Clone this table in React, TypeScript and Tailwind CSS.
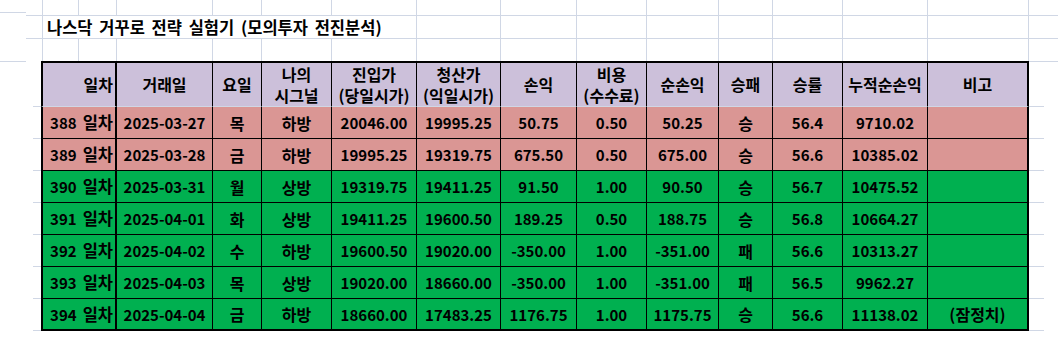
const grid = 'border-[#d0d7e5]'

// 표 열 너비 (테두리 포함)
const colCls = [
  'w-[76px] border-l-2 border-r-2 justify-end pr-[2px]',
  'w-[96px] border-r justify-center',
  'w-[49px] border-r justify-center',
  'w-[70px] border-r justify-center',
  'w-[85px] border-r justify-center',
  'w-[84px] border-r justify-center',
  'w-[76px] border-r justify-center',
  'w-[70px] border-r justify-center',
  'w-[72px] border-r justify-center',
  'w-[54px] border-r justify-center',
  'w-[70px] border-r justify-center',
  'w-[85px] border-r justify-center',
  'w-[101px] border-r-2 justify-center',
]

// 위쪽 빈 셀 너비
const topCols = ['w-[36px]', 'w-[38px]', 'w-[96px]', 'w-[49px]', 'w-[70px]', 'w-[85px]', 'w-[84px]', 'w-[76px]', 'w-[70px]', 'w-[72px]', 'w-[54px]', 'w-[70px]', 'w-[85px]', 'w-[101px]']

const headers: React.ReactNode[] = [
  '일차',
  '거래일',
  '요일',
  <>나의<br />시그널</>,
  <>진입가<br />(당일시가)</>,
  <>청산가<br />(익일시가)</>,
  '손익',
  <>비용<br />(수수료)</>,
  '순손익',
  '승패',
  '승률',
  '누적순손익',
  '비고',
]

type Row = {
  day: number
  date: string
  wd: string
  sig: string
  entry: string
  exit: string
  pnl: string
  fee: string
  net: string
  wl: string
  rate: string
  cum: string
  note: string
  pink?: boolean
}

const rows: Row[] = [
  { day: 388, date: '2025-03-27', wd: '목', sig: '하방', entry: '20046.00', exit: '19995.25', pnl: '50.75', fee: '0.50', net: '50.25', wl: '승', rate: '56.4', cum: '9710.02', note: '', pink: true },
  { day: 389, date: '2025-03-28', wd: '금', sig: '하방', entry: '19995.25', exit: '19319.75', pnl: '675.50', fee: '0.50', net: '675.00', wl: '승', rate: '56.6', cum: '10385.02', note: '', pink: true },
  { day: 390, date: '2025-03-31', wd: '월', sig: '상방', entry: '19319.75', exit: '19411.25', pnl: '91.50', fee: '1.00', net: '90.50', wl: '승', rate: '56.7', cum: '10475.52', note: '' },
  { day: 391, date: '2025-04-01', wd: '화', sig: '상방', entry: '19411.25', exit: '19600.50', pnl: '189.25', fee: '0.50', net: '188.75', wl: '승', rate: '56.8', cum: '10664.27', note: '' },
  { day: 392, date: '2025-04-02', wd: '수', sig: '하방', entry: '19600.50', exit: '19020.00', pnl: '-350.00', fee: '1.00', net: '-351.00', wl: '패', rate: '56.6', cum: '10313.27', note: '' },
  { day: 393, date: '2025-04-03', wd: '목', sig: '상방', entry: '19020.00', exit: '18660.00', pnl: '-350.00', fee: '1.00', net: '-351.00', wl: '패', rate: '56.5', cum: '9962.27', note: '' },
  { day: 394, date: '2025-04-04', wd: '금', sig: '하방', entry: '18660.00', exit: '17483.25', pnl: '1176.75', fee: '1.00', net: '1175.75', wl: '승', rate: '56.6', cum: '11138.02', note: '(잠정치)' },
]

export default function App() {
  return (
    <div className="w-[1058px] h-[347px] bg-white text-black overflow-hidden font-['Noto_Sans_CJK_KR',sans-serif]">

      {/* 시트 윗부분 */}
      <div className="flex h-[16px]">
        <div className={`w-[43px] flex border-r ${grid}`}>
          <div className={`w-[26px] h-[13px] border-b ${grid}`} />
          <div className={`flex-1 border-b ${grid}`} />
        </div>
        {topCols.map((w, i) => (
          <div key={i} className={`${w} border-r border-b ${grid}`} />
        ))}
        <div className={`flex-1 border-b ${grid}`} />
      </div>
      <div className="flex h-[23px]">
        <div className={`w-[43px] flex border-r ${grid}`}>
          <div className="w-[26px]" />
          <div className={`flex-1 border-b ${grid}`} />
        </div>
        <div className={`w-[374px] border-r border-b ${grid} flex items-center pl-[4px] text-[16.5px] font-semibold leading-none whitespace-nowrap [word-spacing:3px]`}>
          나스닥 거꾸로 전략 실험기 (모의투자 전진분석)
        </div>
        {topCols.slice(6).map((w, i) => (
          <div key={i} className={`${w} border-r border-b ${grid}`} />
        ))}
        <div className={`flex-1 border-b ${grid}`} />
      </div>
      <div className="flex h-[22px]">
        <div className={`w-[43px] border-r ${grid}`} />
        {topCols.map((w, i) => (
          <div key={i} className={`${w} border-r ${grid}`} />
        ))}
        <div className="flex-1" />
      </div>

      {/* 헤더 */}
      <div className="flex h-[46px]">
        <div className="w-[41px] flex flex-col justify-between">
          <div className={`w-[26px] border-t ${grid}`} />
          <div className={`ml-[33px] border-b ${grid}`} />
        </div>
        {headers.map((h, i) => (
          <div
            key={i}
            className={`${colCls[i]} flex items-center text-center border-t-2 border-b border-black border-b-[#d0d7e5] bg-[#ccc0da] text-[16px] font-semibold leading-[21px] whitespace-nowrap`}
          >
            {h}
          </div>
        ))}
        <div className={`flex-1 flex flex-col justify-between border-t ${grid}`}>
          <div />
          <div className={`w-[15px] border-b ${grid}`} />
        </div>
      </div>

      {/* 데이터 행 */}
      {rows.map((r, ri) => {
        const last = ri === rows.length - 1
        const cells: [React.ReactNode, boolean][] = [
          [<><span>{r.day}</span><span className="ml-[6px] text-[16.5px] font-semibold">일차</span></>, true],
          [r.date, true],
          [r.wd, false],
          [r.sig, false],
          [r.entry, true],
          [r.exit, true],
          [r.pnl, true],
          [r.fee, true],
          [r.net, true],
          [r.wl, false],
          [r.rate, true],
          [r.cum, true],
          [r.note, false],
        ]
        return (
          <div key={r.day} className="flex h-[32px]">
            <div className="w-[41px] flex justify-end">
              <div className={`w-[8px] border-b ${grid}`} />
            </div>
            {cells.map(([v, bold], i) => (
              <div
                key={i}
                className={`${colCls[i]} flex items-center border-black ${last ? 'border-b-2' : 'border-b'} ${r.pink ? 'bg-[#da9694]' : 'bg-[#00b050]'} leading-none whitespace-nowrap ${bold ? 'text-[15px] font-bold' : 'text-[16px] font-semibold'}`}
              >
                {v}
              </div>
            ))}
            <div className="flex-1">
              <div className={`w-[15px] h-full border-b ${grid}`} />
            </div>
          </div>
        )
      })}
    </div>
  )
}
